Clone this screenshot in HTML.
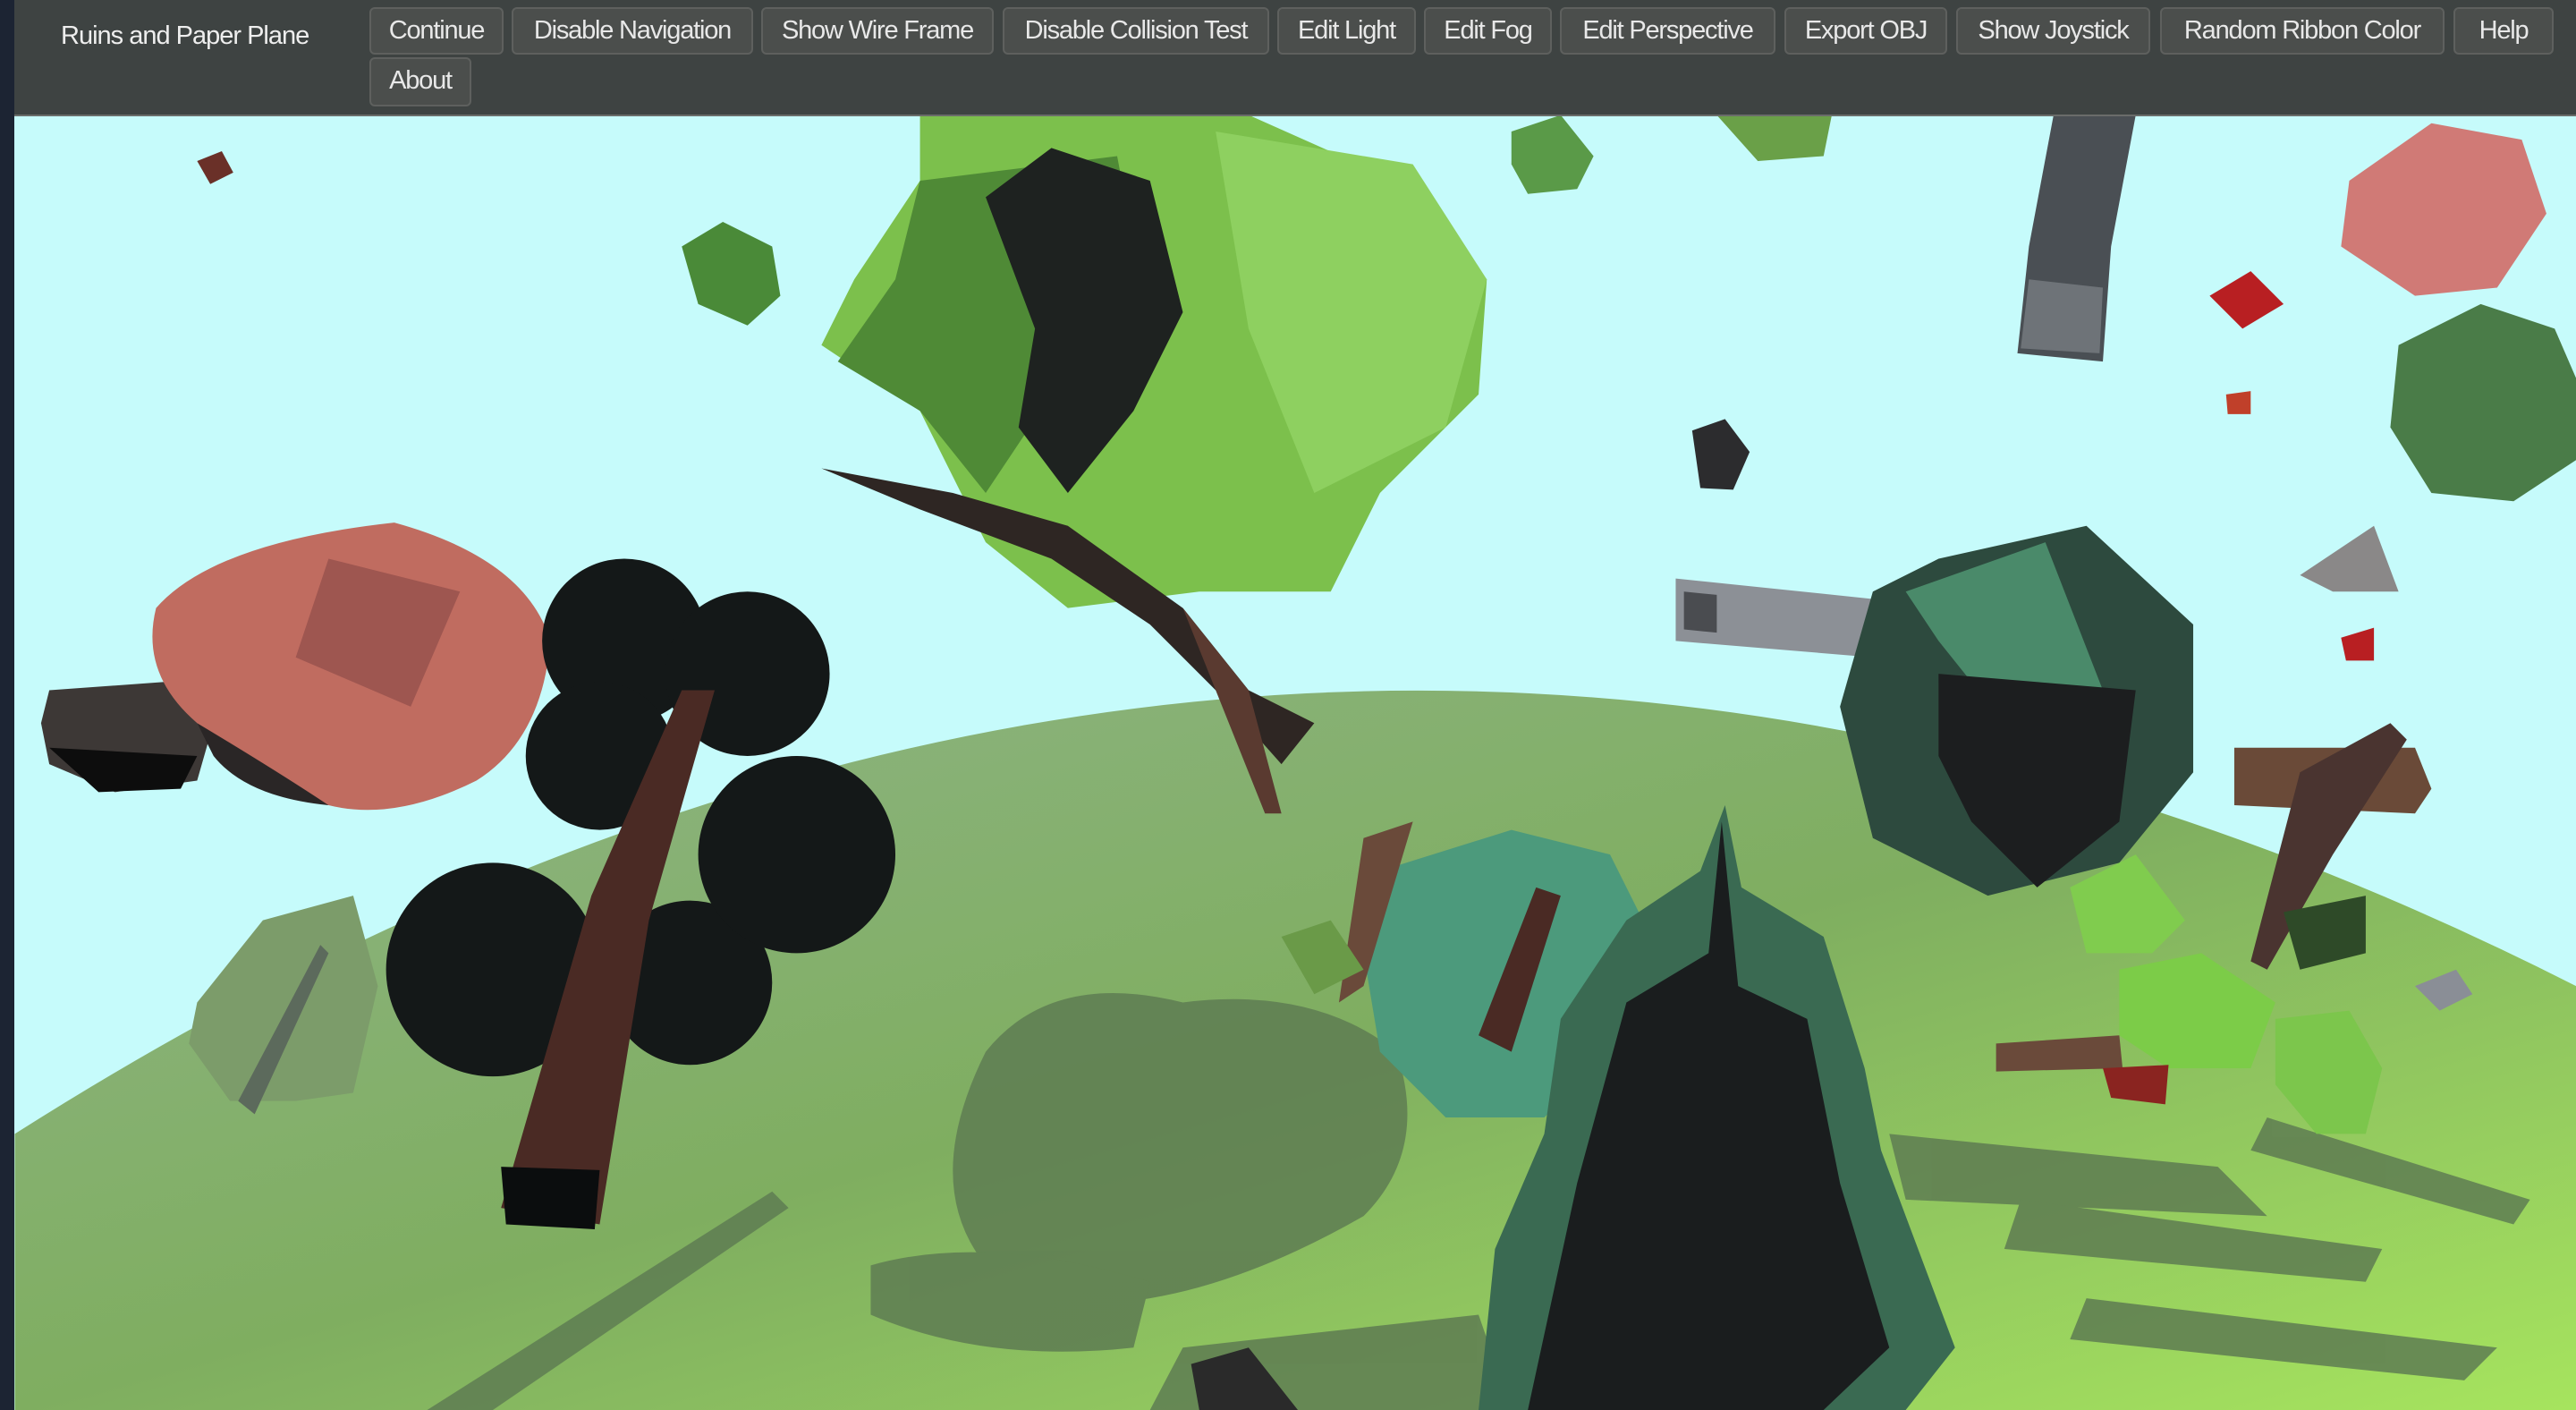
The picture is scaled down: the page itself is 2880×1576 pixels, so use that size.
<!DOCTYPE html>
<html><head><meta charset="utf-8"><style>
html,body{margin:0;padding:0;width:2880px;height:1576px;overflow:hidden;background:#c6fbfb;font-family:"Liberation Sans",sans-serif}
#scene{position:absolute;left:0;top:0;width:2880px;height:1576px}
#strip{position:absolute;left:0;top:0;width:16px;height:1576px;background:#1c2433}
#nav{position:absolute;left:16px;top:0;width:2864px;height:128px;background:rgba(52,53,52,0.93);border-bottom:2px solid #6a6c6a}
#title{position:absolute;left:52px;top:18px;color:#eee;font-size:29px;line-height:44px;letter-spacing:-1px}
.b{position:absolute;height:53px;top:8px;box-sizing:border-box;border:2px solid #5e605e;border-radius:6px;background:rgba(80,82,80,0.75);color:#e8e8e8;font-size:29px;line-height:49px;text-align:center;white-space:nowrap;letter-spacing:-1.2px}
</style></head><body>
<svg id="scene" viewBox="0 0 1568 858" preserveAspectRatio="none">
<defs>
<linearGradient id="g" x1="0" y1="0" x2="1" y2="1">
<stop offset="0" stop-color="#8fb488"/><stop offset="0.5" stop-color="#7fae60"/><stop offset="1" stop-color="#a6e45e"/></linearGradient>
</defs>
<rect width="1568" height="858" fill="#c6fbfb"/>
<path d="M9 690 Q780 200 1568 600 L1568 858 L9 858Z" fill="url(#g)"/>
<g fill="#5e7c52" opacity="0.85">
<path d="M600 640 Q640 590 720 610 Q800 600 850 640 Q870 700 830 740 Q760 780 700 790 Q640 800 600 770 Q560 720 600 640Z"/>
<path d="M530 770 Q600 750 700 780 L690 820 Q600 830 530 800Z"/>
<path d="M260 858 L470 725 L480 735 L300 858Z"/>
<path d="M1150 690 L1350 710 L1380 740 L1160 730Z"/>
<path d="M1230 730 L1450 760 L1440 780 L1220 760Z"/>
<path d="M1270 790 L1520 820 L1500 840 L1260 815Z"/>
<path d="M1380 680 L1540 730 L1530 745 L1370 700Z"/>
<path d="M720 820 L900 800 L920 858 L700 858Z"/>
</g>
<path d="M30 420 L100 415 L130 440 L120 475 L70 482 L30 465 L25 440Z" fill="#3d3836"/>
<path d="M30 455 L120 460 L110 480 L60 482Z" fill="#0d0d0d"/>
<path d="M95 370 Q130 330 240 318 Q320 340 335 390 Q330 450 290 475 Q240 500 200 490 Q140 480 120 440 Q85 410 95 370Z" fill="#c06c60"/>
<path d="M120 440 Q170 470 200 490 Q150 485 130 460Z" fill="#2a2626"/>
<path d="M200 340 L280 360 L250 430 L180 400Z" fill="#9e5650"/>
<path d="M120 610 L160 560 L215 545 L230 600 L215 665 L180 670 L140 670 L115 635Z" fill="#7c9c6a"/>
<path d="M145 670 L195 575 L200 580 L155 678Z" fill="#5c6a5c"/>
<g fill="#141818">
<circle cx="300" cy="590" r="65"/><circle cx="420" cy="598" r="50"/><circle cx="485" cy="520" r="60"/>
<circle cx="380" cy="390" r="50"/><circle cx="455" cy="410" r="50"/><circle cx="365" cy="460" r="45"/>
</g>
<path d="M305 735 L360 545 L415 420 L435 420 L395 560 L365 745Z" fill="#4a2a24"/>
<path d="M305 710 L365 712 L362 748 L308 745Z" fill="#0b0d0e"/>
<path d="M560 70 L760 70 L850 110 L905 170 L900 240 L840 300 L810 360 L730 360 L650 370 L600 330 L560 250 L500 210 L520 170 L560 110Z" fill="#7cc04c"/>
<path d="M740 80 L860 100 L905 170 L880 260 L800 300 L760 200Z" fill="#8ed060"/>
<path d="M560 110 L680 95 L700 200 L640 240 L600 300 L560 250 L510 220 L545 170Z" fill="#4f8a36"/>
<path d="M600 120 L640 90 L700 110 L720 190 L690 250 L650 300 L620 260 L630 200Z" fill="#1e2220"/>
<path d="M500 285 L580 300 L650 320 L720 370 L760 420 L800 440 L780 465 L740 420 L700 380 L640 340 L560 310Z" fill="#2e2623"/>
<path d="M720 370 L760 420 L780 495 L770 495 L740 420Z" fill="#5a3a30"/>
<path d="M415 150 L440 135 L470 150 L475 180 L455 198 L425 185Z" fill="#4a8a38"/>
<path d="M920 80 L950 70 L970 95 L960 115 L930 118 L920 100Z" fill="#5a9a48"/>
<path d="M1030 262 L1050 255 L1065 275 L1055 298 L1035 297Z" fill="#2c2c2e"/>
<path d="M1045 70 L1115 70 L1110 95 L1070 98Z" fill="#6aa048"/>
<path d="M120 98 L135 92 L142 105 L128 112Z" fill="#6a3028"/>
<path d="M1020 352 L1145 365 L1140 400 L1020 390Z" fill="#8c9096"/>
<path d="M1025 360 L1045 362 L1045 385 L1025 383Z" fill="#4a4c50"/>
<path d="M1250 70 L1300 70 L1285 150 L1280 220 L1228 215 L1235 150Z" fill="#4a4f54"/>
<path d="M1235 170 L1280 175 L1278 215 L1230 212Z" fill="#6e7378"/>
<path d="M1180 340 L1270 320 L1335 380 L1335 470 L1290 525 L1210 545 L1140 510 L1120 430 L1140 360Z" fill="#2d4a3e"/>
<path d="M1160 360 L1245 330 L1280 420 L1220 440 L1180 390Z" fill="#4a8a6a"/>
<path d="M1180 410 L1300 420 L1290 500 L1240 540 L1200 500 L1180 460Z" fill="#1c1e1f"/>
<path d="M1430 110 L1480 75 L1535 85 L1550 130 L1520 175 L1470 180 L1425 150Z" fill="#d07a76"/>
<path d="M1460 210 L1510 185 L1555 200 L1568 230 L1568 280 L1530 305 L1480 300 L1455 260Z" fill="#4a7c48"/>
<path d="M1400 350 L1445 320 L1460 360 L1420 360Z" fill="#8a8888"/>
<path d="M1345 180 L1370 165 L1390 185 L1365 200Z" fill="#b81f22"/>
<path d="M1425 388 L1445 382 L1445 402 L1428 402Z" fill="#b81f22"/>
<path d="M1355 240 L1370 238 L1370 252 L1356 252Z" fill="#c0402a"/>
<path d="M1360 455 L1470 455 L1480 480 L1470 495 L1360 490Z" fill="#6a4a38"/>
<path d="M1400 470 L1455 440 L1465 450 L1420 520 L1380 590 L1370 585Z" fill="#4a3430"/>
<path d="M1260 540 L1300 520 L1330 560 L1310 580 L1270 580Z" fill="#80cc4e"/>
<path d="M1290 590 L1340 580 L1385 610 L1370 650 L1320 650 L1290 630Z" fill="#7ccc48"/>
<path d="M1385 620 L1430 615 L1450 650 L1440 690 L1410 690 L1385 660Z" fill="#7cc64c"/>
<path d="M1390 555 L1440 545 L1440 580 L1400 590Z" fill="#2e4a28"/>
<path d="M1215 635 L1290 630 L1292 650 L1215 652Z" fill="#6a4a3a"/>
<path d="M1280 650 L1320 648 L1318 672 L1285 668Z" fill="#8a2420"/>
<path d="M1470 600 L1495 590 L1505 605 L1485 615Z" fill="#8a8e96"/>
<path d="M840 530 L920 505 L980 520 L1000 560 L980 640 L940 680 L880 680 L840 640 L830 580Z" fill="#4c9a7c"/>
<path d="M830 510 L860 500 L830 600 L815 610Z" fill="#6a4a3a"/>
<path d="M900 630 L935 540 L950 545 L920 640Z" fill="#4a2a24"/>
<path d="M1050 490 L1060 540 L1110 570 L1135 650 L1145 700 L1190 820 L1160 858 L900 858 L910 760 L940 690 L950 620 L990 560 L1035 530Z" fill="#3a6a52"/>
<path d="M1048 500 L1058 600 L1100 620 L1120 720 L1150 820 L1110 858 L930 858 L960 720 L990 610 L1040 580Z" fill="#1a1d1e"/>
<path d="M780 570 L810 560 L830 590 L800 605Z" fill="#6a9a48"/>
<path d="M725 830 L760 820 L790 858 L730 858Z" fill="#2a2a2a"/>
</svg>
<div id="strip"></div>
<div id="nav">
<div id="title">Ruins and Paper Plane</div>
</div>
<div class="b" style="left:413px;width:150px">Continue</div>
<div class="b" style="left:572px;width:270px">Disable Navigation</div>
<div class="b" style="left:851px;width:260px">Show Wire Frame</div>
<div class="b" style="left:1121px;width:298px">Disable Collision Test</div>
<div class="b" style="left:1428px;width:155px">Edit Light</div>
<div class="b" style="left:1592px;width:143px">Edit Fog</div>
<div class="b" style="left:1744px;width:241px">Edit Perspective</div>
<div class="b" style="left:1995px;width:182px">Export OBJ</div>
<div class="b" style="left:2187px;width:217px">Show Joystick</div>
<div class="b" style="left:2415px;width:318px">Random Ribbon Color</div>
<div class="b" style="left:2743px;width:112px">Help</div>
<div class="b" style="left:413px;top:64px;width:114px;height:55px">About</div>
</body></html>
